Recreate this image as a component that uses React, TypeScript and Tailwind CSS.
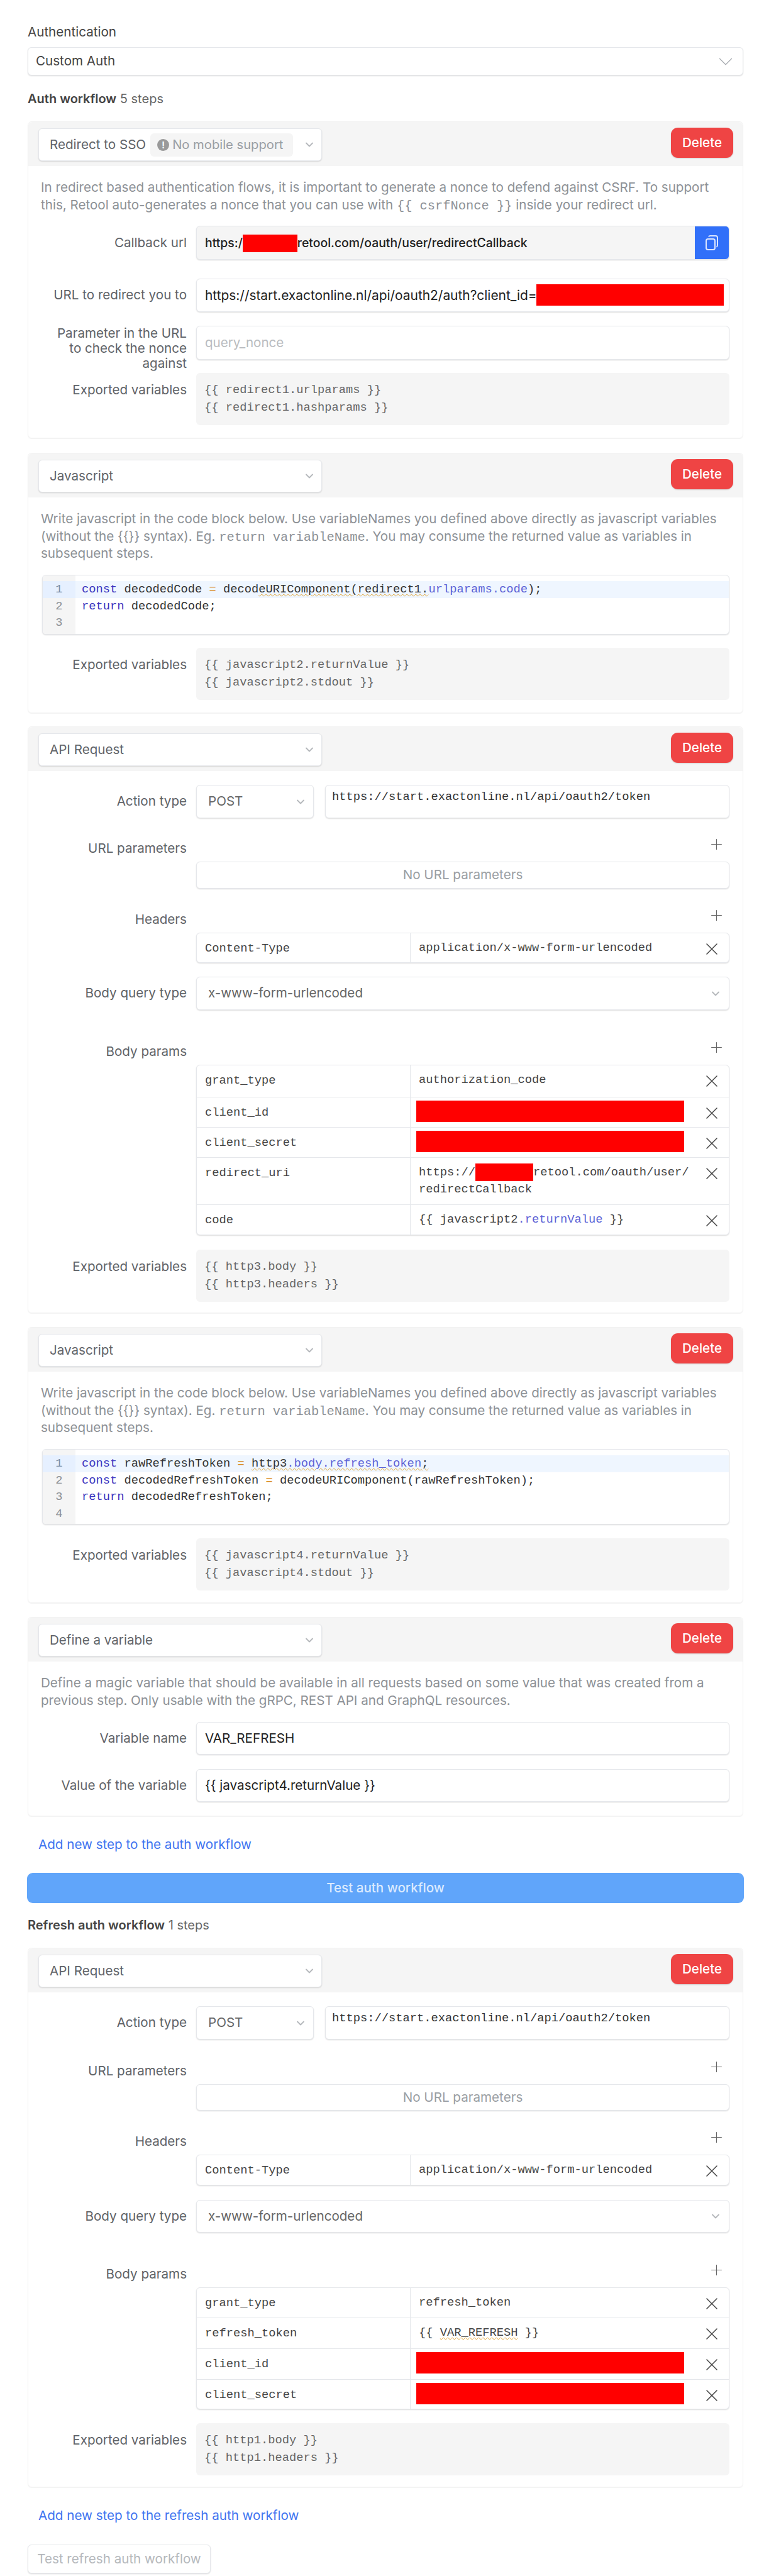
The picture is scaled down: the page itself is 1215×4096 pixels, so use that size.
import React from "react";
import { ChevronDown, Plus } from "lucide-react";

const mono = "font-['Liberation_Mono',monospace] text-[18.75px]";
const field = "border border-[#e5e7eb] rounded-[6px] bg-white shadow-[0_1px_2px_rgba(0,0,0,0.14)]";

const Redacted = ({ className }: { className: string }) => (
  <span className={`inline-block shrink-0 bg-[#ff0000] ${className}`} />
);

const DeleteButton = () => (
  <button className="h-[48px] w-[99px] mt-[9px] rounded-[11px] bg-[#ef4444] text-white text-[20.6px] font-medium shadow-[0_1px_2px_rgba(0,0,0,0.15)]">
    Delete
  </button>
);

const Chevron = () => <ChevronDown size={20} className="ml-auto text-[#b5b8bc]" strokeWidth={2.2} />;

const StepSelect = ({ label, badge }: { label: string; badge?: boolean }) => (
  <div className={`${field} mt-[10px] h-[52px] w-[451px] flex items-center pl-[17px] pr-[9px] text-[20.6px] text-[#5f6368] whitespace-nowrap`}>
    <span>{label}</span>
    {badge && (
      <span className="ml-[7px] h-[37px] w-[227px] rounded-[6px] bg-[#f5f5f5] flex items-center pl-[11px] gap-[5px] text-[#9a9ea3] text-[20.2px]">
        <span className="w-[19px] h-[19px] rounded-full bg-[#9a9a9a] text-white text-[14px] font-bold flex items-center justify-center">!</span>
        No mobile support
      </span>
    )}
    <Chevron />
  </div>
);

const StepCard = ({
  label,
  badge,
  className,
  children,
}: {
  label: string;
  badge?: boolean;
  className: string;
  children: React.ReactNode;
}) => (
  <section className={`border border-[#f1f1f1] rounded-[6px] shadow-[0_1px_1px_rgba(0,0,0,0.05)] ${className}`}>
    <header className="h-[70px] bg-[#f5f5f5] flex justify-between items-start pl-[16px] pr-[15px] rounded-t-[6px]">
      <StepSelect label={label} badge={badge} />
      <DeleteButton />
    </header>
    <div className="pl-[20px] pr-[21px]">{children}</div>
  </section>
);

const Description = ({ children }: { children: React.ReactNode }) => (
  <p className="mt-[20px] text-[20.6px] leading-[27.7px] text-[#8d9196]">{children}</p>
);

const InlineCode = ({ children }: { children: React.ReactNode }) => (
  <code className="font-['Liberation_Mono',monospace] text-[20.4px] leading-none text-[#8d9196]">{children}</code>
);

const Row = ({
  label,
  className = "",
  labelClass = "self-center",
  children,
}: {
  label: React.ReactNode;
  className?: string;
  labelClass?: string;
  children: React.ReactNode;
}) => (
  <div className={`flex gap-[15px] ${className}`}>
    <div className={`w-[232px] shrink-0 text-right text-[20.6px] text-[#5f6368] ${labelClass}`}>{label}</div>
    <div className="flex-1 min-w-0">{children}</div>
  </div>
);

const TextInput = ({ className = "", children }: { className?: string; children: React.ReactNode }) => (
  <div className={`${field} flex items-center px-[13px] whitespace-nowrap overflow-hidden ${className}`}>
    {children}
  </div>
);

const Exported = ({ lines, className = "" }: { lines: string[]; className?: string }) => (
  <Row label="Exported variables" className={className} labelClass="pt-[13px] leading-[28px]">
    <div className={`h-[83px] rounded-[6px] bg-[#f5f5f5] px-[13px] pt-[13px] leading-[28px] text-[#666] ${mono}`}>
      {lines.map((line) => (
        <div key={line}>{line}</div>
      ))}
    </div>
  </Row>
);

const GreySelect = ({ value, className }: { value: string; className: string }) => (
  <div className={`${field} flex items-center pl-[18px] text-[20.6px] text-[#666] ${className}`}>
    <span>{value}</span>
    <Chevron />
  </div>
);

const AddHeader = ({ label, className }: { label: string; className: string }) => (
  <div className={`flex gap-[15px] ${className}`}>
    <div className="w-[232px] shrink-0 text-right text-[20.6px] leading-[28px] text-[#5f6368]">{label}</div>
    <div className="flex-1 h-[35px] flex justify-end items-start pr-[7px]">
      <Plus size={27} className="text-[#666] -mt-[6px]" strokeWidth={1.1} />
    </div>
  </div>
);

const RemoveIcon = () => (
  <svg width="18" height="18" viewBox="0 0 18 18" fill="none" stroke="#444" strokeWidth="1.5" strokeLinecap="round">
    <path d="M1 1 L17 17 M17 1 L1 17" />
  </svg>
);

type KV = { k: string; v: React.ReactNode; h: string };

const KeyValues = ({ rows }: { rows: KV[] }) => (
  <div className={`${field} ml-[247px] overflow-hidden`}>
    {rows.map((row, i) => (
      <div key={row.k} className={`flex ${row.h} ${i > 0 ? "border-t border-[#e5e7eb]" : ""}`}>
        <div className={`w-[340px] shrink-0 border-r border-[#e5e7eb] px-[13px] pt-[10px] leading-[28px] text-[#444] ${mono}`}>{row.k}</div>
        <div className={`flex-1 min-w-0 pl-[13px] pt-[10px] leading-[26px] text-[#444] whitespace-nowrap ${mono}`}>{row.v}</div>
        <div className="w-[54px] shrink-0 flex justify-center pt-[16px]">
          <RemoveIcon />
        </div>
      </div>
    ))}
  </div>
);

const RedCell = () => <Redacted className="-ml-[4px] -mt-[5px] w-[426px] h-[34px] block" />;
const Kw = ({ children }: { children: React.ReactNode }) => <span className="text-[#3a34c0]">{children}</span>;
const Prop = ({ children }: { children: React.ReactNode }) => <span className="text-[#5b62d6]">{children}</span>;
const Op = () => <span className="text-[#d98a1f]">=</span>;
const Squiggle = ({ children }: { children: React.ReactNode }) => (
  <span className="underline decoration-wavy decoration-[#e0a030] decoration-1 underline-offset-2">{children}</span>
);

const CodeBlock = ({ lines, className }: { lines: React.ReactNode[]; className: string }) => (
  <div className={`${field} ml-[2px] overflow-hidden ${className}`}>
    <div className="flex h-full">
      <div className={`w-[52px] shrink-0 bg-[#f5f5f5] pt-[9px] leading-[26.5px] text-center text-[#8d9196] ${mono}`}>
        {lines.map((_, i) => (
          <div key={i} className={i === 0 ? "bg-[#e6f0ff] text-[#7b8fa8]" : ""}>
            {i + 1}
          </div>
        ))}
      </div>
      <div className={`flex-1 pt-[9px] leading-[26.5px] text-[#333] whitespace-pre ${mono}`}>
        {lines.map((line, i) => (
          <div key={i} className={`pl-[10px] h-[26.5px] ${i === 0 ? "bg-[#eff6ff]" : ""}`}>
            {line}
          </div>
        ))}
      </div>
    </div>
  </div>
);

const ActionRow = ({ className }: { className: string }) => (
  <Row label="Action type" className={className}>
    <div className="flex gap-[18px]">
      <GreySelect value="POST" className="w-[187px] h-[53px] pr-[10px]" />
      <div className={`${field} flex-1 h-[53px] px-[10px] pt-[5px] leading-[26px] text-[#333] ${mono}`}>
        https://start.exactonline.nl/api/oauth2/token
      </div>
    </div>
  </Row>
);

const JsDescription = () => (
  <Description>
    Write javascript in the code block below. Use variableNames you defined above directly as javascript variables
    (without the {"{{}}"} syntax). Eg. <InlineCode>return variableName</InlineCode>. You may consume the returned value
    as variables in subsequent steps.
  </Description>
);

const Title = ({ name, steps, className }: { name: string; steps: string; className: string }) => (
  <div className={`h-[28px] leading-[28px] text-[20px] text-[#666] ${className}`}>
    <span className="font-semibold text-[#444]">{name}</span> {steps}
  </div>
);

const Link = ({ children, className }: { children: string; className: string }) => (
  <a className={`block pl-[17px] h-[28px] leading-[28px] text-[20.6px] text-[#3f74f0] ${className}`}>{children}</a>
);

const CopyIcon = () => (
  <svg width="22" height="26" viewBox="0 0 22 26" fill="none" stroke="#dbe6ff" strokeWidth="2">
    <rect x="2" y="7" width="14" height="17" rx="3" />
    <path d="M6 3.5 Q6.5 2 8.5 2 H17 Q20 2 20 5 V17 Q20 19 18.5 19.5" />
  </svg>
);

export default function App() {
  return (
    <div className="w-[1215px] h-[4096px] bg-white font-['Inter',sans-serif] pl-[44px] pr-[33px] pt-[37px]">
      <div className="h-[28px] leading-[28px] text-[20.6px] text-[#444]">Authentication</div>
      <div className={`${field} mt-[10px] h-[45px] flex items-center pl-[12px] pr-[8px] text-[20.6px] text-[#444]`}>
        <span>Custom Auth</span>
        <ChevronDown size={38} strokeWidth={0.8} className="ml-auto text-[#a8acb1]" />
      </div>
      <Title name="Auth workflow" steps="5 steps" className="mt-[23px]" />

      <StepCard label="Redirect to SSO" badge className="mt-[22px] h-[504px]">
        <Description>
          In redirect based authentication flows, it is important to generate a nonce to defend against CSRF. To support
          this, Retool auto-generates a nonce that you can use with <InlineCode>{"{{ csrfNonce }}"}</InlineCode> inside your redirect url.
        </Description>
        <Row label="Callback url" className="mt-[20px]">
          <div className="h-[54px] flex rounded-[6px] border border-[#e5e7eb] bg-[#f5f5f5] overflow-hidden shadow-[0_1px_2px_rgba(0,0,0,0.14)]">
            <div className="flex-1 flex items-center pl-[13px] text-[19.4px] font-medium text-[#222] whitespace-nowrap">
              https:/
              <Redacted className="w-[87px] h-[28px] mt-[2px]" />
              retool.com/oauth/user/redirectCallback
            </div>
            <div className="w-[54px] bg-[#3170f9] flex items-center justify-center">
              <CopyIcon />
            </div>
          </div>
        </Row>
        <Row label="URL to redirect you to" className="mt-[30px]">
          <TextInput className="h-[53px] text-[20.9px] text-[#222] relative">
            https://start.exactonline.nl/api/oauth2/auth?client_id=
            <Redacted className="absolute right-[8px] top-[8px] w-[298px] h-[34px]" />
          </TextInput>
        </Row>
        <Row label={<>Parameter in the URL<br />to check the nonce<br />against</>} className="mt-[22px]" labelClass="leading-[24px]">
          <TextInput className="h-[54px] text-[20.6px] text-[#b9bcc0]">query_nonce</TextInput>
        </Row>
        <Exported lines={["{{ redirect1.urlparams }}", "{{ redirect1.hashparams }}"]} className="mt-[3px]" />
      </StepCard>

      <StepCard label="Javascript" className="mt-[23px] h-[414px]">
        <JsDescription />
        <CodeBlock
          className="mt-[20px] h-[95px]"
          lines={[
            <>
              <Kw>const</Kw> decodedCode <Op /> decod<Squiggle>eURIComponent(redirect1.</Squiggle>
              <Prop>urlparams.code</Prop>);
            </>,
            <>
              <Kw>return</Kw> decodedCode;
            </>,
            "",
          ]}
        />
        <Exported lines={["{{ javascript2.returnValue }}", "{{ javascript2.stdout }}"]} className="mt-[21px]" />
      </StepCard>

      <StepCard label="API Request" className="mt-[21px] h-[933px]">
        <ActionRow className="mt-[22px]" />
        <AddHeader label="URL parameters" className="mt-[34px]" />
        <div className={`${field} ml-[247px] h-[43px] flex items-center justify-center text-[20.6px] text-[#9a9ea3]`}>No URL parameters</div>
        <AddHeader label="Headers" className="mt-[35px]" />
        <KeyValues rows={[{ k: "Content-Type", v: "application/x-www-form-urlencoded", h: "h-[46px]" }]} />
        <Row label="Body query type" className="mt-[22px]">
          <GreySelect value="x-www-form-urlencoded" className="h-[53px] pr-[11px]" />
        </Row>
        <AddHeader label="Body params" className="mt-[52px]" />
        <KeyValues
          rows={[
            { k: "grant_type", v: "authorization_code", h: "h-[50px]" },
            { k: "client_id", v: <RedCell />, h: "h-[48px]" },
            { k: "client_secret", v: <RedCell />, h: "h-[48px]" },
            {
              k: "redirect_uri",
              v: (
                <div className="flex flex-col">
                  <div className="flex items-start">
                    https://
                    <Redacted className="w-[92px] h-[28px] -mt-[1px]" />
                    retool.com/oauth/user/
                  </div>
                  <div>redirectCallback</div>
                </div>
              ),
              h: "h-[75px]",
            },
            {
              k: "code",
              v: (
                <>
                  {"{{ javascript2"}
                  <Prop>.returnValue</Prop>
                  {" }}"}
                </>
              ),
              h: "h-[48px]",
            },
          ]}
        />
        <Exported lines={["{{ http3.body }}", "{{ http3.headers }}"]} className="mt-[23px]" />
      </StepCard>

      <StepCard label="Javascript" className="mt-[22px] h-[439px]">
        <JsDescription />
        <CodeBlock
          className="mt-[20px] h-[120px]"
          lines={[
            <>
              <Kw>const</Kw> rawRefreshToken <Op /> <Squiggle>http3<Prop>.body.refresh_token</Prop>;</Squiggle>
            </>,
            <>
              <Kw>const</Kw> decodedRefreshToken <Op /> decodeURIComponent(rawRefreshToken);
            </>,
            <>
              <Kw>return</Kw> decodedRefreshToken;
            </>,
            "",
          ]}
        />
        <Exported lines={["{{ javascript4.returnValue }}", "{{ javascript4.stdout }}"]} className="mt-[22px]" />
      </StepCard>

      <StepCard label="Define a variable" className="mt-[22px] h-[317px]">
        <Description>
          Define a magic variable that should be available in all requests based on some value that was created from a
          previous step. Only usable with the gRPC, REST API and GraphQL resources.
        </Description>
        <Row label="Variable name" className="mt-[21px]">
          <TextInput className="h-[52px] text-[20.6px] text-[#222]">VAR_REFRESH</TextInput>
        </Row>
        <Row label="Value of the variable" className="mt-[23px]">
          <TextInput className="h-[52px] text-[20.6px] text-[#222]">{"{{ javascript4.returnValue }}"}</TextInput>
        </Row>
      </StepCard>

      <Link className="mt-[31px]">Add new step to the auth workflow</Link>
      <button className="mt-[31px] -mx-px w-[1140px] h-[48px] rounded-[9px] bg-[#60a5fa] text-[20.6px] font-medium text-[#dbeafe]">
        Test auth workflow
      </button>
      <Title name="Refresh auth workflow" steps="1 steps" className="mt-[21px]" />

      <StepCard label="API Request" className="mt-[22px] h-[858px]">
        <ActionRow className="mt-[22px]" />
        <AddHeader label="URL parameters" className="mt-[36px]" />
        <div className={`${field} ml-[247px] h-[42px] flex items-center justify-center text-[20.6px] text-[#9a9ea3]`}>No URL parameters</div>
        <AddHeader label="Headers" className="mt-[35px]" />
        <KeyValues rows={[{ k: "Content-Type", v: "application/x-www-form-urlencoded", h: "h-[47px]" }]} />
        <Row label="Body query type" className="mt-[23px]">
          <GreySelect value="x-www-form-urlencoded" className="h-[52px] pr-[11px]" />
        </Row>
        <AddHeader label="Body params" className="mt-[52px]" />
        <KeyValues
          rows={[
            { k: "grant_type", v: "refresh_token", h: "h-[47px]" },
            { k: "refresh_token", v: <>{"{{ "}<Squiggle>VAR_REFRESH</Squiggle>{" }}"}</>, h: "h-[49px]" },
            { k: "client_id", v: <RedCell />, h: "h-[49px]" },
            { k: "client_secret", v: <RedCell />, h: "h-[47px]" },
          ]}
        />
        <Exported lines={["{{ http1.body }}", "{{ http1.headers }}"]} className="mt-[22px]" />
      </StepCard>

      <Link className="mt-[31px]">Add new step to the refresh auth workflow</Link>
      <button className={`${field} mt-[32px] w-[291px] h-[46px] text-[20.6px] text-[#b5b8bc]`}>Test refresh auth workflow</button>
    </div>
  );
}
